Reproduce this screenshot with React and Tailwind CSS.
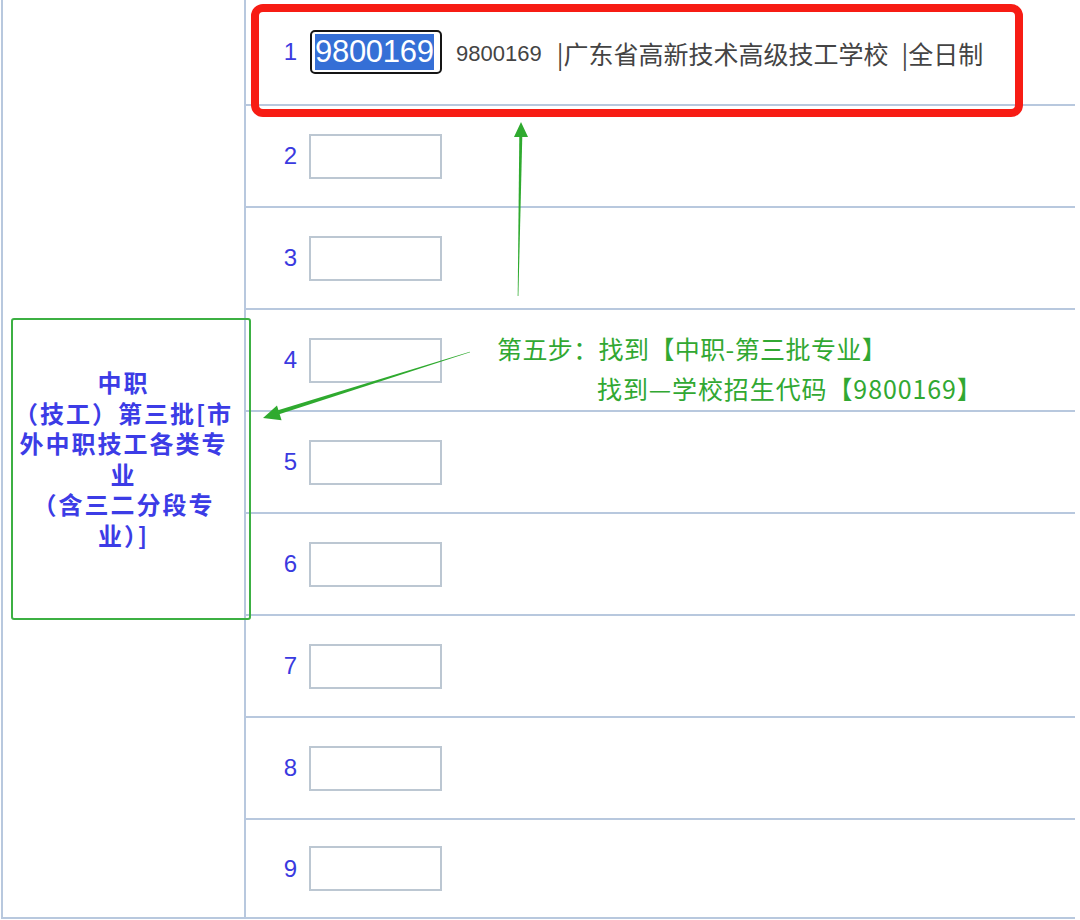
import React from "react";

const CJK = { fontFamily: '"Noto Sans CJK SC", "Noto Sans", sans-serif' };
const LAT = { fontFamily: '"Liberation Sans", Arial, sans-serif' };

function Row({ n, h, last, children }) {
  return (
    <div
      className={`flex items-center ${h} ${last ? "" : "border-b-2 border-[#b8c8de]"}`}
    >
      <div className="w-[51px] text-right text-[24px] leading-none text-[#3a3ae0]" style={LAT}>
        {n}
      </div>
      {children ? (
        children
      ) : (
        <div className="ml-[12px] w-[133px] h-[45px] border-2 border-[#bcc7d2] bg-white" />
      )}
    </div>
  );
}

export default function App() {
  const heights = [
    "h-[106px]",
    "h-[102px]",
    "h-[102px]",
    "h-[102px]",
    "h-[102px]",
    "h-[102px]",
    "h-[102px]",
    "h-[102px]",
    "h-[97px]",
  ];
  return (
    <div className="relative w-[1080px] h-[920px] overflow-hidden bg-white" style={CJK}>
      <div className="ml-px flex w-[1074px] border-l-2 border-b-2 border-[#b8c8de]">
        <div className="w-[243px] shrink-0 border-r-2 border-[#b8c8de] flex flex-col items-center justify-center text-[24px] leading-[30.5px] font-bold text-[#3c3ce6] tracking-[2px]">
          <div className="whitespace-nowrap">中职</div>
          <div className="whitespace-nowrap">（技工）第三批[市</div>
          <div className="whitespace-nowrap">外中职技工各类专</div>
          <div className="whitespace-nowrap">业</div>
          <div className="whitespace-nowrap">（含三二分段专</div>
          <div className="whitespace-nowrap">业）]</div>
        </div>
        <div className="flex-1 flex flex-col">
          {heights.map((h, i) =>
            i === 0 ? (
              <Row key={i} n={1} h={h}>
                <div className="ml-[13px] w-[132px] h-[44px] rounded-[5px] border-2 border-[#151515] bg-white flex items-center pl-[3px]">
                  <span
                    className="bg-[#356fd6] text-white text-[31px] leading-[36px] tracking-[-0.3px]"
                    style={LAT}
                  >
                    9800169
                  </span>
                </div>
                <span className="ml-[14px] mt-[3px] text-[22px] text-[#444444]" style={LAT}>
                  9800169
                </span>
                <span className="ml-[15px] mt-[3px] text-[25px] text-[#444444] whitespace-nowrap">
                  |广东省高新技术高级技工学校
                </span>
                <span className="ml-[13px] mt-[3px] text-[25px] text-[#444444] whitespace-nowrap">
                  |全日制
                </span>
              </Row>
            ) : (
              <Row key={i} n={i + 1} h={h} last={i === heights.length - 1} />
            )
          )}
        </div>
      </div>

      {/* red highlight box */}
      <div className="absolute left-[251px] top-[4px] w-[772px] h-[113px] border-[8px] border-[#f71c14] rounded-[12px]" />

      {/* green box */}
      <div className="absolute left-[11px] top-[318px] w-[240px] h-[302px] border-2 border-[#3cb043] rounded-[3px]" />

      {/* annotation text */}
      <div className="absolute left-[497px] top-[332px] text-[25px] leading-[32px] tracking-[0.4px] text-[#31a832] whitespace-nowrap">
        第五步：找到【中职-第三批专业】
      </div>
      <div className="absolute left-[597px] top-[372px] text-[25px] leading-[32px] tracking-[0.9px] text-[#31a832] whitespace-nowrap">
        找到—学校招生代码【9800169】
      </div>

      {/* arrows */}
      <svg
        className="absolute left-0 top-0 pointer-events-none"
        width="1080"
        height="920"
        viewBox="0 0 1080 920"
      >
        <polygon
          points="517.7,296 518.4,296 522.3,136 519.3,136"
          fill="#2faa2f"
        />
        <polygon points="521,122 528,137 514,137" fill="#2faa2f" />
        <polygon
          points="470.1,352.3 469.9,351.7 277.9,410.3 279.1,414.2"
          fill="#2faa2f"
        />
        <polygon points="263,418 277,405.6 281.6,420.3" fill="#2faa2f" />
      </svg>
    </div>
  );
}
